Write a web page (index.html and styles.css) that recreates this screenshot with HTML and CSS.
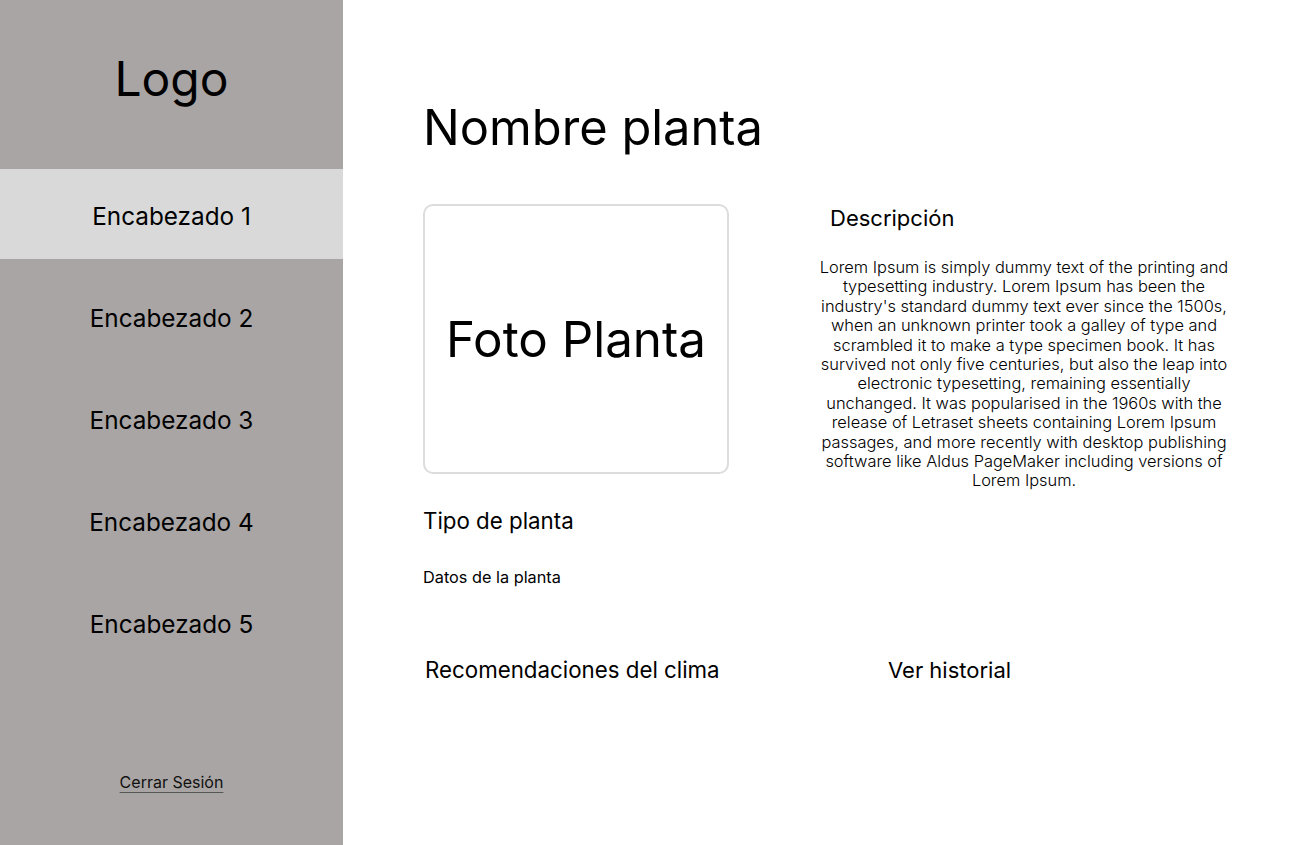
FILE: index.html
```html
<!DOCTYPE html>
<html lang="es">
<head>
<meta charset="utf-8">
<title>Nombre planta</title>
<link rel="stylesheet" href="styles.css">
</head>
<body>
<div class="app">
  <aside class="sidebar">
    <div class="logo">Logo</div>
    <nav class="nav">
      <a class="nav-item active">Encabezado 1</a>
      <a class="nav-item">Encabezado 2</a>
      <a class="nav-item">Encabezado 3</a>
      <a class="nav-item">Encabezado 4</a>
      <a class="nav-item">Encabezado 5</a>
    </nav>
    <div class="logout"><a class="logout-link">Cerrar Sesión</a></div>
  </aside>
  <main class="main">
    <h1 class="title">Nombre planta</h1>
    <div class="top-row">
      <div class="left-col">
        <div class="photo">Foto Planta</div>
        <h2 class="section-title type-title">Tipo de planta</h2>
        <p class="data">Datos de la planta</p>
      </div>
      <section class="desc">
        <h2 class="desc-title">Descripción</h2>
        <p class="desc-text">Lorem Ipsum is simply dummy text of the printing and typesetting industry. Lorem Ipsum has been the industry's standard dummy text ever since the 1500s, when an unknown printer took a galley of type and scrambled it to make a type specimen book. It has survived not only five centuries, but also the leap into electronic typesetting, remaining essentially unchanged. It was popularised in the 1960s with the release of Letraset sheets containing Lorem Ipsum passages, and more recently with desktop publishing software like Aldus PageMaker including versions of Lorem Ipsum.</p>
      </section>
    </div>
    <div class="bottom-row">
      <h2 class="section-title reco">Recomendaciones del clima</h2>
      <h2 class="section-title hist">Ver historial</h2>
    </div>
  </main>
</div>
</body>
</html>
```

FILE: styles.css
```css
* { box-sizing: border-box; }
html, body { margin: 0; padding: 0; }
body {
  font-family: Inter, "Noto Sans", sans-serif;
  color: #000;
  background: #fff;
}
.app {
  display: flex;
  width: 1302px;
  height: 845px;
}
.sidebar {
  width: 343px;
  flex: none;
  background: #a9a5a4;
  display: flex;
  flex-direction: column;
}
.logo {
  height: 169px;
  padding-top: 50px;
  font-size: 48px;
  line-height: 58px;
  text-align: center;
}
.nav {
  display: flex;
  flex-direction: column;
  gap: 12px;
}
.nav-item {
  height: 90px;
  display: flex;
  align-items: center;
  justify-content: center;
  padding-top: 4px;
  font-size: 24.3px;
  line-height: 30px;
  color: #000;
}
.nav-item.active { background: #d9d9d9; }
.logout {
  margin-top: auto;
  padding-bottom: 52px;
  text-align: center;
}
.logout-link {
  font-size: 16px;
  line-height: 22px;
  color: #111;
  text-decoration: underline;
  text-decoration-color: #555;
  text-underline-offset: 4px;
}
.main {
  flex: 1;
  padding-left: 80px;
  padding-top: 99px;
}
.title {
  margin: 0;
  font-size: 48.8px;
  font-weight: 400;
  line-height: 58px;
}
.top-row {
  display: flex;
  align-items: flex-start;
  margin-top: 47px;
}
.left-col {
  width: 306px;
  display: flex;
  flex-direction: column;
}
.photo {
  width: 306px;
  height: 270px;
  border: 2px solid #dcdcdc;
  border-radius: 10px;
  display: flex;
  align-items: center;
  justify-content: center;
  font-size: 49.3px;
  line-height: 58px;
}
.desc {
  width: 418px;
  margin-left: 87px;
}
.desc-title {
  margin: 0 0 0 14px;
  font-size: 22px;
  font-weight: 400;
  line-height: 28px;
}
.desc-text {
  margin: 26px 0 0 -1px;
  width: 418px;
  font-size: 16.4px;
  font-weight: 300;
  line-height: 19.4px;
  text-align: center;
}
.section-title {
  margin: 0;
  font-size: 22.3px;
  font-weight: 400;
  line-height: 28px;
  white-space: nowrap;
}
.type-title { margin-top: 33px; }
.data {
  margin: 32px 0 0;
  font-size: 16.3px;
  line-height: 20px;
}
.bottom-row {
  display: flex;
  margin-top: 69px;
  padding-left: 2px;
}
.reco { width: 463px; }
.hist { font-size: 22px; }
```
